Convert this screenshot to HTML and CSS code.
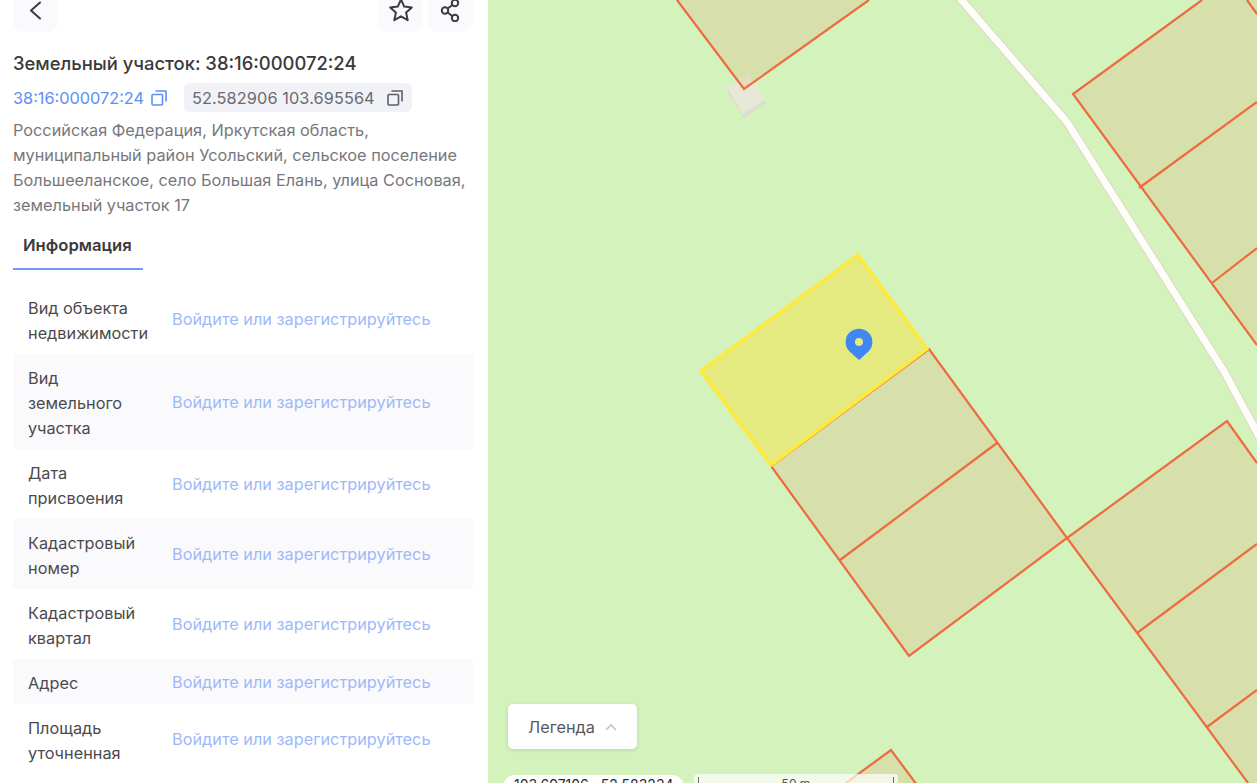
FILE: index.html
```html
<!DOCTYPE html>
<html lang="ru">
<head>
    <meta charset="UTF-8">
    <meta name="viewport" content="width=device-width, initial-scale=1.0">
    <title>Земельный участок: 38:16:000072:24</title>
    <link rel="stylesheet" href="styles.css">
</head>
<body>
    <aside class="panel">
        <div class="toolbar">
            <button class="icon-btn" type="button" aria-label="Назад">
                <svg width="24" height="24" viewBox="0 0 24 24"><path class="icon-line" d="M16 4.500 L7 12.500 L16 20.500"/></svg>
            </button>
            <div class="toolbar-right">
                <button class="icon-btn" type="button" aria-label="В избранное">
                    <svg width="26" height="26" viewBox="0 0 26 26"><path class="icon-line" d="M13 2.500 L16.200 9.600 L23.800 10.400 L18.100 15.600 L19.700 23.200 L13 19.300 L6.300 23.200 L7.900 15.600 L2.200 10.400 L9.800 9.600 Z"/></svg>
                </button>
                <button class="icon-btn" type="button" aria-label="Поделиться">
                    <svg width="24" height="24" viewBox="0 0 24 24"><circle class="icon-line" cx="16" cy="5" r="3.200"/><circle class="icon-line" cx="6" cy="12.500" r="3.200"/><circle class="icon-line" cx="16" cy="20" r="3.200"/><path class="icon-line" d="M13.300 7 L8.700 10.500 M8.700 14.500 L13.300 18"/></svg>
                </button>
            </div>
        </div>

        <h1 class="title">Земельный участок: 38:16:000072:24</h1>

        <div class="codes">
            <a class="code-link" href="#">38:16:000072:24</a>
            <svg class="copy-icon copy-blue" width="16" height="16" viewBox="0 0 16 16"><rect x="1" y="4.500" width="10.500" height="10.500" rx="1"/><path d="M4.500 1 H15 V11.500"/></svg>
            <div class="coords-chip">
                <span>52.582906 103.695564</span>
                <svg class="copy-icon" width="16" height="16" viewBox="0 0 16 16"><rect x="1" y="4.500" width="10.500" height="10.500" rx="1"/><path d="M4.500 1 H15 V11.500"/></svg>
            </div>
        </div>

        <p class="address">Российская Федерация, Иркутская область, муниципальный район Усольский, сельское поселение Большееланское, село Большая Елань, улица Сосновая, земельный участок 17</p>

        <div class="tabs">
            <div class="tab">Информация</div>
        </div>

        <div class="info-table">
            <div class="info-row"><div class="info-label">Вид объекта недвижимости</div><a class="info-value" href="#">Войдите или зарегистрируйтесь</a></div>
            <div class="info-row"><div class="info-label">Вид земельного участка</div><a class="info-value" href="#">Войдите или зарегистрируйтесь</a></div>
            <div class="info-row"><div class="info-label">Дата присвоения</div><a class="info-value" href="#">Войдите или зарегистрируйтесь</a></div>
            <div class="info-row"><div class="info-label">Кадастровый номер</div><a class="info-value" href="#">Войдите или зарегистрируйтесь</a></div>
            <div class="info-row"><div class="info-label">Кадастровый квартал</div><a class="info-value" href="#">Войдите или зарегистрируйтесь</a></div>
            <div class="info-row"><div class="info-label">Адрес</div><a class="info-value" href="#">Войдите или зарегистрируйтесь</a></div>
            <div class="info-row"><div class="info-label">Площадь уточненная</div><a class="info-value" href="#">Войдите или зарегистрируйтесь</a></div>
        </div>
    </aside>

    <main class="map">
        <svg class="map-canvas" viewBox="488 0 769 783" width="769" height="783">
            <!-- parcels -->
            <polygon class="parcel" points="677,0 744,89 869,0"/>
            <polygon class="building-side" points="727,90 748,76 766,103 744,119"/>
            <polygon class="building" points="727,87 748,74 765,99 743,114"/>
            <polygon class="building-over" points="738,81 748,74 753,81 744,89"/>
            <polyline class="parcel-line" points="677,0 744,89 869,0"/>

            <polyline class="road-edge" points="958,-4 1067,122 1225,373 1262,442"/>
            <polyline class="road" points="958,-4 1067,122 1225,373 1262,442"/>

            <polygon class="parcel" points="1073,94 1202,0 1257,0 1257,345"/>
            <polyline class="parcel-line" points="1202,0 1073,94 1257,345"/>
            <line class="parcel-line" x1="1139" y1="188" x2="1257" y2="102"/>
            <line class="parcel-line" x1="1212" y1="283" x2="1257" y2="248"/>
            <line class="parcel-line" x1="1247" y1="0" x2="1257" y2="14"/>

            <polygon class="parcel" points="771,466 929,349 1067,538 909,656"/>
            <polygon class="parcel-line" points="771,466 929,349 1067,538 909,656"/>
            <line class="parcel-line" x1="840" y1="560" x2="997" y2="443"/>

            <polygon class="parcel" points="1067,538 1227,421 1257,463 1257,783 1248,783"/>
            <polyline class="parcel-line" points="1257,463 1227,421 1067,538 1248,783"/>
            <line class="parcel-line" x1="1137" y1="633" x2="1257" y2="544"/>
            <line class="parcel-line" x1="1207" y1="727" x2="1257" y2="690"/>

            <polygon class="parcel" points="891,750 917,785 846,785"/>
            <polyline class="parcel-line" points="846,783 891,750 917,785"/>

            <!-- selected parcel -->
            <polygon class="selected" points="858,255 927,349 771,465 701,371"/>
            <path class="pin" fill-rule="evenodd" d="M859 360 L849.500 351.500 A13.400 13.400 0 1 1 868.500 351.500 Z M859 338 A4 4 0 1 0 859 346 A4 4 0 1 0 859 338 Z"/>
        </svg>

        <div class="map-controls">
            <button class="legend" type="button">
                Легенда
                <svg width="12" height="8" viewBox="0 0 12 8"><path d="M1 7 L6 2 L11 7"/></svg>
            </button>
            <div class="map-bottom">
                <div class="cursor-coords">103.697106 , 52.583234</div>
                <div class="scale">50 m</div>
            </div>
        </div>
    </main>
</body>
</html>
```

FILE: styles.css
```css
html, body {
    height: 100%;
}

body {
    margin: 0;
    display: flex;
    overflow: hidden;
    font-family: Inter, "Noto Sans", sans-serif;
    font-size: 16.3px;
    color: #3d3d3f;
}

.panel {
    width: 488px;
    height: 783px;
    flex-shrink: 0;
    box-sizing: border-box;
    padding: 0 15px 0 13px;
    background: white;
    overflow: hidden;
}

.toolbar {
    display: flex;
    justify-content: space-between;
    margin-top: -13px;
}

.toolbar-right {
    display: flex;
    gap: 5px;
}

.icon-btn {
    width: 45px;
    height: 45px;
    padding: 0;
    border: none;
    border-radius: 10px;
    background: #fafafd;
    display: flex;
    align-items: center;
    justify-content: center;
}

.icon-line {
    fill: none;
    stroke: #3b3b40;
    stroke-width: 2;
    stroke-linejoin: round;
    stroke-linecap: round;
}

.title {
    margin: 19px 0 0;
    font-size: 18.4px;
    line-height: 24px;
    font-weight: 500;
    color: #3a3a3c;
}

.codes {
    display: flex;
    align-items: center;
    margin-top: 8px;
    height: 29px;
}

.code-link {
    color: #5d8ff5;
    text-decoration: none;
    margin-right: 7px;
}

.copy-icon {
    fill: none;
    stroke: #5f6066;
    stroke-width: 1.6;
    flex-shrink: 0;
}

.copy-blue {
    stroke: #5d8ff5;
}

.coords-chip {
    display: flex;
    align-items: center;
    gap: 12px;
    height: 29px;
    margin-left: 17px;
    padding: 0 9px 0 8px;
    border-radius: 6px;
    background: #f1f2f8;
    color: #6a6a6e;
    letter-spacing: 0.1px;
}

.address {
    margin: 6px 0 0;
    line-height: 25px;
    color: #77777b;
}

.tabs {
    margin-top: 8px;
}

.tab {
    width: 130px;
    box-sizing: border-box;
    padding: 0 10px;
    height: 44px;
    line-height: 39px;
    font-size: 16.6px;
    font-weight: 600;
    color: #3a3a3c;
    border-bottom: 2px solid #6f9bf6;
}

.info-table {
    margin-top: 14px;
}

.info-row {
    display: grid;
    grid-template-columns: 144px 1fr;
    align-items: center;
    padding: 9px 15px 8px;
    line-height: 25px;
}

.info-row:nth-child(even) {
    background: #fafafd;
}

.info-label {
    padding: 3px 19px 0 0;
    color: #4a4a4d;
}

.info-value {
    color: #9db8fa;
    text-decoration: none;
    white-space: nowrap;
}

.map {
    position: relative;
    flex: 1;
    height: 783px;
    background: #d4f2bb;
    overflow: hidden;
}

.map-canvas {
    position: absolute;
    inset: 0;
    display: block;
}

.parcel {
    fill: #d7e0aa;
}

.parcel-line {
    fill: none;
    stroke: #ee6a40;
    stroke-width: 2.2;
}

.building {
    fill: #e7e8d8;
}

.building-side {
    fill: #dcdfca;
}

.building-over {
    fill: #e8dcc0;
}

.road-edge {
    fill: none;
    stroke: #e2d6c4;
    stroke-width: 9;
}

.road {
    fill: none;
    stroke: #fdfdfa;
    stroke-width: 7;
}

.selected {
    fill: #e4ea80;
    stroke: #ffe93a;
    stroke-width: 3.4;
}

.pin {
    fill: #3f87f5;
}

.map-controls {
    position: absolute;
    left: 15px;
    top: 704px;
}

.legend {
    display: flex;
    align-items: center;
    gap: 10px;
    height: 45px;
    margin-left: 5px;
    padding: 0 20px;
    border: none;
    border-radius: 5px;
    background: white;
    box-shadow: 0 1px 4px rgba(0, 0, 0, 0.12);
    font-family: inherit;
    font-size: 16.3px;
    color: #58585c;
}

.legend svg {
    fill: none;
    stroke: #bcc4d6;
    stroke-width: 1.6;
}

.map-bottom {
    display: flex;
    gap: 10px;
    margin-top: 26px;
}

.cursor-coords {
    height: 26px;
    box-sizing: border-box;
    padding: 0 11px;
    width: 181px;
    border-radius: 12px;
    background: white;
    font-size: 14px;
    line-height: 20px;
    color: #2c2c2e;
    white-space: nowrap;
}

.scale {
    width: 204px;
    height: 26px;
    box-sizing: border-box;
    margin-top: -1px;
    border-radius: 4px;
    background: linear-gradient(#6b6b6b, #6b6b6b) 4px 3px / 1px 12px no-repeat,
                linear-gradient(#6b6b6b, #6b6b6b) 199px 3px / 1px 12px no-repeat,
                rgba(255, 255, 255, 0.7);
    font-size: 12px;
    line-height: 20px;
    text-align: center;
    color: #555;
}
```
